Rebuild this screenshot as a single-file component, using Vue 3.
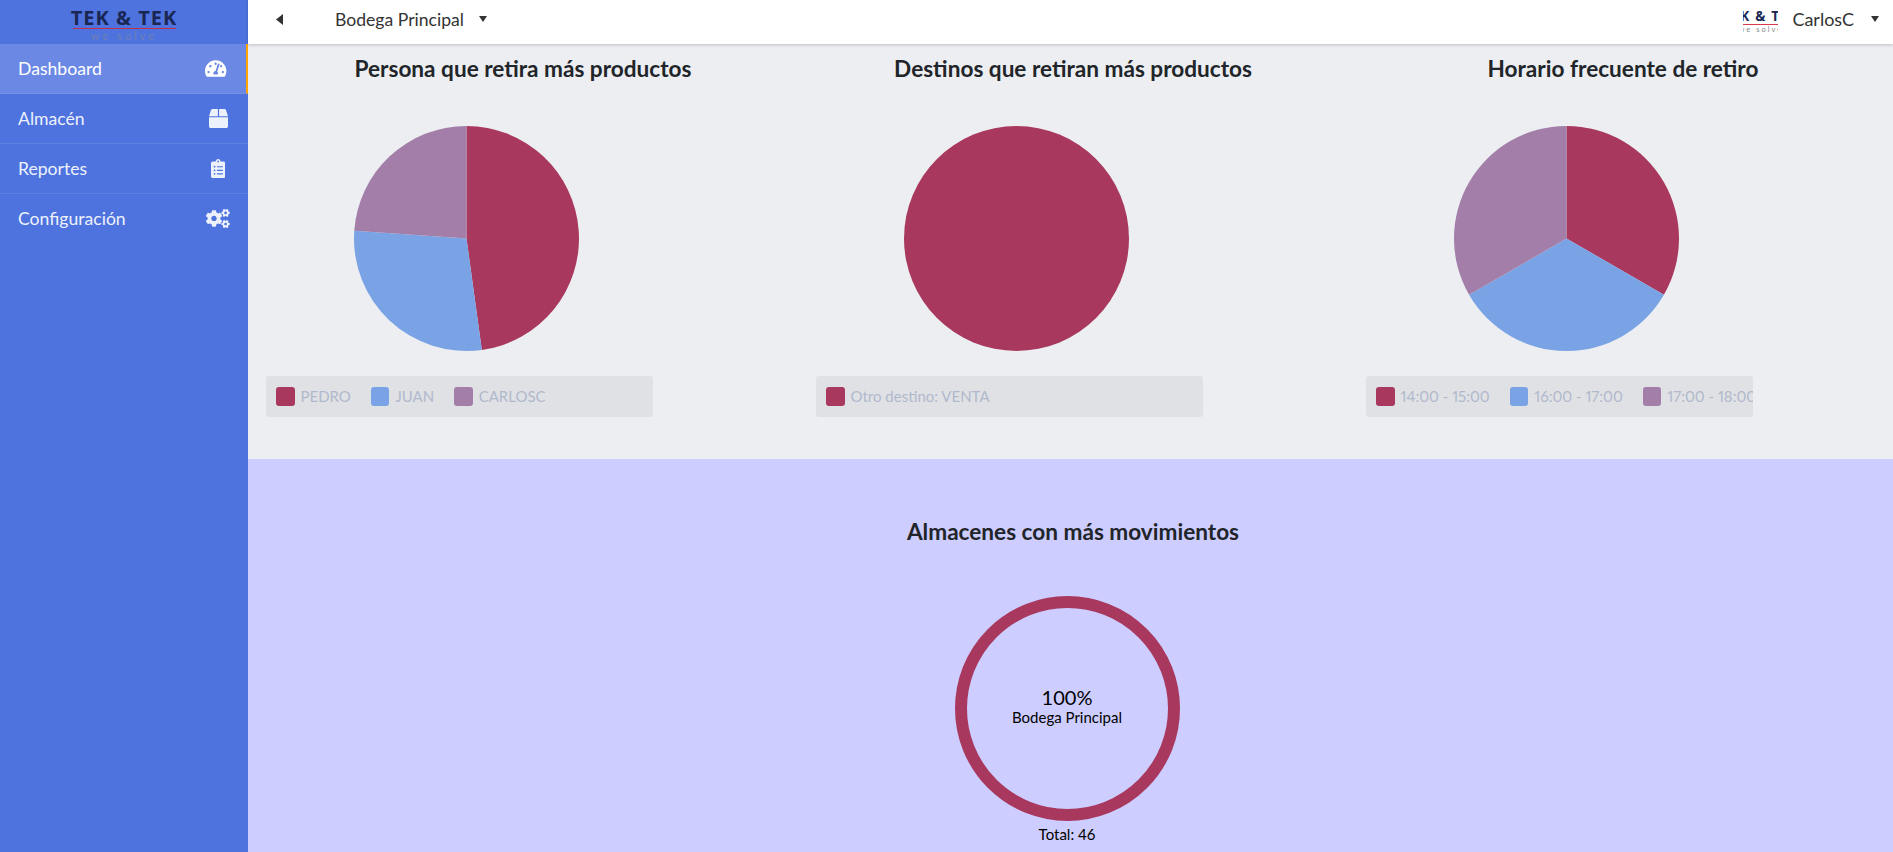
<template>
  <div class="layout">
    <aside class="sidebar">
      <div class="brand">
        <div class="logo">
          <span class="logo-name">TEK &amp; TEK</span>
          <span class="logo-rule"></span>
          <span class="logo-sub">we solve</span>
        </div>
      </div>
      <nav>
        <a v-for="item in menu" :key="item.label" class="nav-item" :class="{ active: item.active }">
          <span>{{ item.label }}</span>
          <span class="nav-icon">
            <svg :viewBox="item.box" :height="19" fill="currentColor"><path :d="item.icon" /></svg>
          </span>
        </a>
      </nav>
    </aside>

    <div class="main">
      <header class="topbar">
        <svg class="back" width="7" height="11" viewBox="0 0 7 11"><path d="M7 0v11L0 5.5z" /></svg>
        <span class="store">Bodega Principal</span>
        <span class="caret"></span>
        <div class="user">
          <div class="mini-logo">
            <div class="mini-inner">
              <span class="mini-name">TEK &amp; TEK</span>
              <span class="mini-rule"></span>
              <span class="mini-sub">we solve</span>
            </div>
          </div>
          <span class="user-name">CarlosC</span>
          <span class="caret"></span>
        </div>
      </header>

      <div class="content">
        <section class="charts">
          <div v-for="chart in charts" :key="chart.title" class="chart">
            <h2>{{ chart.title }}</h2>
            <svg class="pie" width="225" height="225" viewBox="-112.5 -112.5 225 225">
              <path v-for="s in slices(chart.items)" :key="s.name" :d="s.d" :fill="s.color" />
            </svg>
            <ul class="legend">
              <li v-for="(it, i) in chart.items" :key="it.name">
                <i :style="{ background: colors[i] }"></i>{{ it.name }}
              </li>
            </ul>
          </div>
        </section>

        <section class="stores">
          <h2>Almacenes con más movimientos</h2>
          <div class="gauge">
            <svg width="225" height="225" viewBox="0 0 225 225">
              <circle cx="112.5" cy="112.5" r="106.5" fill="none" stroke="#a8385d" stroke-width="12" />
            </svg>
            <div class="gauge-text">
              <span class="pct">100%</span>
              <span class="gauge-label">Bodega Principal</span>
            </div>
          </div>
          <p class="total">Total: 46</p>
        </section>
      </div>
    </div>
  </div>
</template>

<script setup>
const colors = ['#a8385d', '#7aa3e5', '#a27ea8']

const menu = [
  {
    label: 'Dashboard',
    active: true,
    box: '0 0 576 512',
    icon: 'M288 32C128.94 32 0 160.94 0 320c0 52.8 14.25 102.26 39.06 144.8 5.61 9.62 16.3 15.2 27.44 15.2h443c11.14 0 21.83-5.58 27.44-15.2C561.75 422.26 576 372.8 576 320c0-159.06-128.94-288-288-288zm0 64c14.71 0 26.58 10.13 30.32 23.65-1.11 2.26-2.64 4.23-3.45 6.67l-9.22 27.67c-5.13 3.49-10.97 6.01-17.64 6.01-17.67 0-32-14.33-32-32S270.33 96 288 96zM96 384c-17.67 0-32-14.33-32-32s14.33-32 32-32 32 14.33 32 32-14.33 32-32 32zm48-160c-17.67 0-32-14.33-32-32s14.33-32 32-32 32 14.33 32 32-14.33 32-32 32zm246.77-72.41l-61.33 184C343.13 347.33 352 364.54 352 384c0 11.72-3.38 22.55-8.88 32H232.88c-5.5-9.45-8.88-20.28-8.88-32 0-33.94 26.5-61.43 59.9-63.59l61.34-184.01c4.17-12.56 17.73-19.45 30.36-15.17 12.57 4.19 19.35 17.79 15.17 30.36zm14.66 57.2l15.52-46.55c3.47-1.29 7.13-2.23 11.05-2.23 17.67 0 32 14.33 32 32s-14.33 32-32 32c-11.38-.01-20.89-6.28-26.57-15.22zM480 384c-17.67 0-32-14.33-32-32s14.33-32 32-32 32 14.33 32 32-14.33 32-32 32z'
  },
  {
    label: 'Almacén',
    box: '0 0 512 512',
    icon: 'M509.5 184.6L458.9 32.8C452.4 13.2 434.1 0 413.4 0H272v192h238.7c-.4-2.5-.4-5-1.2-7.4zM240 0H98.6c-20.7 0-39 13.2-45.5 32.8L2.5 184.6c-.8 2.4-.8 4.9-1.2 7.4H240V0zM0 224v240c0 26.5 21.5 48 48 48h416c26.5 0 48-21.5 48-48V224H0z'
  },
  {
    label: 'Reportes',
    box: '0 0 384 512',
    icon: 'M336 64h-80c0-35.3-28.7-64-64-64s-64 28.7-64 64H48C21.5 64 0 85.5 0 112v352c0 26.5 21.5 48 48 48h288c26.5 0 48-21.5 48-48V112c0-26.5-21.5-48-48-48zM96 424c-13.3 0-24-10.7-24-24s10.7-24 24-24 24 10.7 24 24-10.7 24-24 24zm0-96c-13.3 0-24-10.7-24-24s10.7-24 24-24 24 10.7 24 24-10.7 24-24 24zm0-96c-13.3 0-24-10.7-24-24s10.7-24 24-24 24 10.7 24 24-10.7 24-24 24zm96-192c13.3 0 24 10.7 24 24s-10.7 24-24 24-24-10.7-24-24 10.7-24 24-24zm128 368c0 4.4-3.6 8-8 8H168c-4.4 0-8-3.6-8-8v-16c0-4.4 3.6-8 8-8h144c4.4 0 8 3.6 8 8v16zm0-96c0 4.4-3.6 8-8 8H168c-4.4 0-8-3.6-8-8v-16c0-4.4 3.6-8 8-8h144c4.4 0 8 3.6 8 8v16zm0-96c0 4.4-3.6 8-8 8H168c-4.4 0-8-3.6-8-8v-16c0-4.4 3.6-8 8-8h144c4.4 0 8 3.6 8 8v16z'
  },
  {
    label: 'Configuración',
    box: '0 0 640 512',
    icon: 'M512.1 191l-8.2 14.3c-3 5.3-9.4 7.5-15.1 5.4-11.8-4.4-22.6-10.7-32.1-18.6-4.6-3.8-5.8-10.5-2.8-15.7l8.2-14.3c-6.9-8-12.3-17.3-15.9-27.4h-16.5c-6 0-11.2-4.3-12.2-10.3-2-12-2.1-24.6 0-37.1 1-6 6.2-10.4 12.2-10.4h16.5c3.6-10.1 9-19.4 15.9-27.4l-8.2-14.3c-3-5.2-1.9-11.9 2.8-15.7 9.5-7.9 20.4-14.2 32.1-18.6 5.7-2.1 12.1.1 15.1 5.4l8.2 14.3c10.5-1.9 21.2-1.9 31.7 0L552 6.3c3-5.3 9.4-7.5 15.1-5.4 11.8 4.4 22.6 10.7 32.1 18.6 4.6 3.8 5.8 10.5 2.8 15.7l-8.2 14.3c6.9 8 12.3 17.3 15.9 27.4h16.5c6 0 11.2 4.3 12.2 10.3 2 12 2.1 24.6 0 37.1-1 6-6.2 10.4-12.2 10.4h-16.5c-3.6 10.1-9 19.4-15.9 27.4l8.2 14.3c3 5.2 1.9 11.9-2.8 15.7-9.5 7.9-20.4 14.2-32.1 18.6-5.7 2.1-12.1-.1-15.1-5.4l-8.2-14.3c-10.4 1.9-21.2 1.9-31.7 0zm-10.5-58.8c38.5 29.6 82.4-14.3 52.8-52.8-38.5-29.7-82.4 14.3-52.8 52.8zM386.3 286.1l33.7 16.8c10.1 5.8 14.5 18.1 10.5 29.1-8.9 24.2-26.4 46.4-42.6 65.8-7.4 8.9-20.2 11.1-30.3 5.3l-29.1-16.8c-16 13.7-34.6 24.6-54.9 31.7v33.6c0 11.6-8.3 21.6-19.7 23.6-24.6 4.2-50.4 4.4-75.9 0-11.5-2-20-11.9-20-23.6V418c-20.3-7.2-38.9-18-54.9-31.7L74 403c-10 5.8-22.9 3.6-30.3-5.3-16.2-19.4-33.3-41.6-42.2-65.7-4-10.9.4-23.2 10.5-29.1l33.3-16.8c-3.9-20.9-3.9-42.4 0-63.4L12 205.8c-10.1-5.8-14.6-18.1-10.5-29 8.9-24.2 26-46.4 42.2-65.8 7.4-8.9 20.2-11.1 30.3-5.3l29.1 16.8c16-13.7 34.6-24.6 54.9-31.7V57.1c0-11.5 8.2-21.5 19.6-23.5 24.6-4.2 50.5-4.4 76-.1 11.5 2 20 11.9 20 23.6v33.6c20.3 7.2 38.9 18 54.9 31.7l29.1-16.8c10-5.8 22.9-3.6 30.3 5.3 16.2 19.4 33.2 41.6 42.1 65.8 4 10.9.1 23.2-10 29.1l-33.7 16.8c3.9 21 3.9 42.5 0 63.5zm-117.6 21.1c59.2-77-28.7-164.9-105.7-105.7-59.2 77 28.7 164.9 105.7 105.7zm243.4 182.7l-8.2 14.3c-3 5.3-9.4 7.5-15.1 5.4-11.8-4.4-22.6-10.7-32.1-18.6-4.6-3.8-5.8-10.5-2.8-15.7l8.2-14.3c-6.9-8-12.3-17.3-15.9-27.4h-16.5c-6 0-11.2-4.3-12.2-10.3-2-12-2.1-24.6 0-37.1 1-6 6.2-10.4 12.2-10.4h16.5c3.6-10.1 9-19.4 15.9-27.4l-8.2-14.3c-3-5.2-1.9-11.9 2.8-15.7 9.5-7.9 20.4-14.2 32.1-18.6 5.7-2.1 12.1.1 15.1 5.4l8.2 14.3c10.5-1.9 21.2-1.9 31.7 0l8.2-14.3c3-5.3 9.4-7.5 15.1-5.4 11.8 4.4 22.6 10.7 32.1 18.6 4.6 3.8 5.8 10.5 2.8 15.7l-8.2 14.3c6.9 8 12.3 17.3 15.9 27.4h16.5c6 0 11.2 4.3 12.2 10.3 2 12 2.1 24.6 0 37.1-1 6-6.2 10.4-12.2 10.4h-16.5c-3.6 10.1-9 19.4-15.9 27.4l8.2 14.3c3 5.2 1.9 11.9-2.8 15.7-9.5 7.9-20.4 14.2-32.1 18.6-5.7 2.1-12.1-.1-15.1-5.4l-8.2-14.3c-10.4 1.9-21.2 1.9-31.7 0zM501.6 431c38.5 29.6 82.4-14.3 52.8-52.8-38.5-29.6-82.4 14.3-52.8 52.8z'
  }
]

const charts = [
  {
    title: 'Persona que retira más productos',
    items: [
      { name: 'PEDRO', value: 22 },
      { name: 'JUAN', value: 13 },
      { name: 'CARLOSC', value: 11 }
    ]
  },
  {
    title: 'Destinos que retiran más productos',
    items: [{ name: 'Otro destino: VENTA', value: 46 }]
  },
  {
    title: 'Horario frecuente de retiro',
    items: [
      { name: '14:00 - 15:00', value: 1 },
      { name: '16:00 - 17:00', value: 1 },
      { name: '17:00 - 18:00', value: 1 }
    ]
  }
]

const R = 112.5

const point = (a) => `${(R * Math.sin(a)).toFixed(2)} ${(-R * Math.cos(a)).toFixed(2)}`

// slices clockwise from the top of the pie
const slices = (items) => {
  const total = items.reduce((sum, it) => sum + it.value, 0)
  let start = 0
  return items.map((it, i) => {
    const end = start + (it.value / total) * Math.PI * 2
    let d
    if (items.length === 1) {
      d = `M0 ${-R}A${R} ${R} 0 1 1 0 ${R}A${R} ${R} 0 1 1 0 ${-R}Z`
    } else {
      const large = end - start > Math.PI ? 1 : 0
      d = `M0 0L${point(start)}A${R} ${R} 0 ${large} 1 ${point(end)}Z`
    }
    start = end
    return { name: it.name, d, color: colors[i] }
  })
}
</script>

<style>
html,
body {
  height: 100%;
  overflow: hidden;
}
</style>

<style scoped>
.layout {
  display: flex;
  height: 852px;
  overflow: hidden;
  font-family: Lato, "Open Sans", sans-serif;
  color: #212529;
}

.sidebar {
  flex: 0 0 248px;
  background: #4e73df;
  color: #edf1fc;
}

.brand {
  height: 44px;
  display: flex;
  justify-content: center;
}

.logo {
  width: 110px;
  padding-top: 7px;
  display: flex;
  flex-direction: column;
  align-items: center;
}

.logo-name {
  font-family: "Open Sans", sans-serif;
  font-weight: 700;
  font-size: 20px;
  line-height: 21px;
  letter-spacing: 1px;
  white-space: nowrap;
  color: #1a2755;
}

.logo-rule {
  width: 103px;
  height: 1px;
  background: #c0304a;
}

.logo-sub {
  font-size: 11px;
  line-height: 13px;
  letter-spacing: 3px;
  color: #6f7fb4;
}

.nav-item {
  height: 50px;
  box-sizing: border-box;
  display: flex;
  align-items: center;
  justify-content: space-between;
  padding: 0 17px 0 18px;
  font-size: 17.6px;
  border-bottom: 1px solid rgba(255, 255, 255, 0.08);
}

.nav-item:last-child {
  padding-bottom: 2px;
  border-bottom: none;
}

.nav-item.active {
  background: #6a88e4;
  color: #fff;
  border-right: 2px solid #ffa500;
}

.nav-icon {
  width: 26px;
  display: flex;
  justify-content: center;
}

.main {
  flex: 1;
  min-width: 0;
  display: flex;
  flex-direction: column;
}

.topbar {
  position: relative;
  z-index: 1;
  flex: 0 0 44px;
  box-sizing: border-box;
  display: flex;
  align-items: center;
  padding: 0 14px 6px 28px;
  background: #fff;
  box-shadow: 0 1px 3px rgba(0, 0, 0, 0.2);
  font-size: 17.6px;
  color: #333;
}

.back {
  fill: #333;
}

.store {
  margin-left: 52px;
  margin-right: 15px;
}

.caret {
  width: 0;
  height: 0;
  border-left: 4.5px solid transparent;
  border-right: 4.5px solid transparent;
  border-top: 6px solid #333;
}

.user {
  margin-left: auto;
  display: flex;
  align-items: center;
}

.user-name {
  margin: 0 17px 0 14px;
  font-size: 18px;
}

.mini-logo {
  width: 35px;
  overflow: hidden;
  display: flex;
  justify-content: center;
  margin-top: 6px;
}

.mini-inner {
  flex: none;
  width: 76px;
  display: flex;
  flex-direction: column;
  align-items: center;
}

.mini-name {
  font-family: "Open Sans", sans-serif;
  font-weight: 700;
  font-size: 13.5px;
  line-height: 15px;
  letter-spacing: 1.2px;
  white-space: nowrap;
  color: #1a2755;
}

.mini-rule {
  width: 72px;
  height: 1px;
  background: #d9384f;
}

.mini-sub {
  font-size: 7.5px;
  line-height: 10px;
  letter-spacing: 2px;
  color: #888;
}

.content {
  flex: 1;
  min-height: 0;
  overflow: hidden;
}

.charts {
  display: grid;
  grid-template-columns: repeat(3, 550px);
  height: 415px;
  background: #eceef2;
}

.chart {
  min-width: 0;
}

h2 {
  margin: 0;
  font-size: 22.6px;
  line-height: 30px;
  font-weight: 700;
  text-align: center;
  color: #212529;
}

.chart h2 {
  margin-top: 10px;
}

.pie {
  display: block;
  margin: 41.5px 0 0 105.5px;
}

.legend {
  list-style: none;
  width: 387px;
  height: 41px;
  box-sizing: border-box;
  margin: 25px 0 0 18px;
  padding: 0 0 0 10px;
  display: flex;
  align-items: center;
  gap: 20px;
  overflow: hidden;
  white-space: nowrap;
  background: #e0e1e5;
  border-radius: 3px;
  font-size: 15px;
  font-variant-numeric: proportional-nums;
  color: #b0b9cc;
}

.legend li {
  display: flex;
  align-items: center;
  flex: none;
}

.legend i {
  width: 18.5px;
  height: 19px;
  margin-right: 6px;
  border-radius: 3px;
}

.stores {
  width: 1650px;
  height: 400px;
  background: #cdcdff;
  color: #000;
}

.stores h2 {
  padding-top: 58px;
}

.gauge {
  position: relative;
  width: 225px;
  height: 225px;
  margin: 48.5px auto 0;
  left: -6px;
}

.gauge svg {
  display: block;
}

.gauge-text {
  position: absolute;
  inset: 0;
  display: flex;
  flex-direction: column;
  align-items: center;
  justify-content: center;
  padding-bottom: 4px;
  box-sizing: border-box;
}

.pct {
  font-size: 20px;
  line-height: 22px;
}

.gauge-label {
  font-size: 15px;
  line-height: 18px;
}

.total {
  margin: 3px 0 0;
  font-size: 15px;
  line-height: 20px;
  text-align: center;
  position: relative;
  left: -6px;
}
</style>
